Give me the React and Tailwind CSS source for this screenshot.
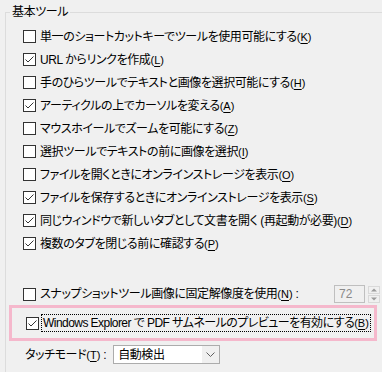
import React from "react";

const font = {
  fontFamily: '"Liberation Sans", "Noto Sans CJK JP", sans-serif',
};

const Check = ({ checked }) => (
  <div className="w-[13px] h-[13px] shrink-0 border border-[#333333] bg-white flex items-center justify-center">
    {checked && (
      <svg width="11" height="11" viewBox="0 0 11 11">
        <path d="M1.5 5.5 L4 8 L9.5 2.5" fill="none" stroke="#333333" strokeWidth="1" />
      </svg>
    )}
  </div>
);

const Key = ({ k }) => (
  <span className="text-[11px] tracking-normal">
    (<span className="underline underline-offset-2">{k}</span>)
  </span>
);

const Row = ({ checked, label, k }) => (
  <div className="h-[23px] flex items-center gap-[4px]">
    <Check checked={checked} />
    <span className="whitespace-nowrap">
      {label}
      <Key k={k} />
    </span>
  </div>
);

const options = [
  { checked: false, label: "単一のショートカットキーでツールを使用可能にする", k: "K" },
  { checked: true, label: "URL からリンクを作成", k: "L" },
  { checked: false, label: "手のひらツールでテキストと画像を選択可能にする", k: "H" },
  { checked: true, label: "アーティクルの上でカーソルを変える", k: "A" },
  { checked: false, label: "マウスホイールでズームを可能にする", k: "Z" },
  { checked: false, label: "選択ツールでテキストの前に画像を選択", k: "I" },
  { checked: false, label: "ファイルを開くときにオンラインストレージを表示", k: "O" },
  { checked: true, label: "ファイルを保存するときにオンラインストレージを表示", k: "S" },
  { checked: true, label: "同じウィンドウで新しいタブとして文書を開く (再起動が必要)", k: "D" },
  { checked: true, label: "複数のタブを閉じる前に確認する", k: "P" },
];

export default function App() {
  return (
    <div
      className="w-[382px] h-[372px] bg-[#f0f0f0] overflow-hidden text-[12px] leading-[16px] tracking-[-0.4px] text-black [font-feature-settings:'palt']"
      style={font}
    >
      <fieldset className="mt-[4px] ml-[5px] w-[420px] h-[400px] border border-[#dcdcdc]">
        <legend className="ml-[4px] px-[2px]">基本ツール</legend>
        <div className="w-[376px] pt-[5px]">
          {/* checkbox list */}
          <div className="pl-[17px] flex flex-col">
            {options.map((o) => (
              <Row key={o.k} {...o} />
            ))}
          </div>

          {/* snapshot resolution */}
          <div className="mt-[28px] h-[22px] pl-[17px] pr-[2px] flex items-center">
            <Check checked={false} />
            <span className="ml-[4px] whitespace-nowrap">
              スナップショットツール画像に固定解像度を使用
              <Key k="N" /> :
            </span>
            <div className="ml-auto flex items-center gap-[3px]">
              <div className="w-[31px] h-[18px] border border-[#bfbfbf] bg-[#f0f0f0] text-[#8a8a8a] text-[12px] leading-[16px] pl-[4px] tracking-normal">
                72
              </div>
              <div className="flex flex-col gap-[1px]">
                <div className="w-[12px] h-[8px] bg-[#f0f0f0] border border-[#d9d9d9] flex items-center justify-center">
                  <svg width="6" height="4" viewBox="0 0 6 4">
                    <path d="M0 3.5 L3 0.5 L6 3.5 Z" fill="#9a9a9a" />
                  </svg>
                </div>
                <div className="w-[12px] h-[8px] bg-[#f0f0f0] border border-[#d9d9d9] flex items-center justify-center">
                  <svg width="6" height="4" viewBox="0 0 6 4">
                    <path d="M0 0.5 L3 3.5 L6 0.5 Z" fill="#9a9a9a" />
                  </svg>
                </div>
              </div>
            </div>
          </div>

          {/* highlighted option */}
          <div className="ml-[3px] w-[368px] h-[36px] border-[3px] border-[#f5b8cc] pl-[14px] flex items-center">
            <Check checked={true} />
            <span className="ml-[2px] px-[1px] border border-dotted border-black whitespace-nowrap leading-[16px] tracking-[-0.55px]">
              Windows Explorer で PDF サムネールのプレビューを有効にする
              <Key k="B" />
            </span>
          </div>

          {/* touch mode */}
          <div className="mt-[4px] pl-[19px] flex items-center gap-[7px]">
            <span className="whitespace-nowrap">
              タッチモード
              <Key k="T" /> :
            </span>
            <div className="w-[107px] h-[19px] border border-[#acacac] bg-white flex items-center">
              <span className="pl-[4px] flex-1">自動検出</span>
              <div className="w-[17px] h-full bg-[#f0f0f0] flex items-center justify-center">
                <svg width="9" height="5" viewBox="0 0 9 5">
                  <path d="M0.5 0.5 L4.5 4.5 L8.5 0.5" fill="none" stroke="#606060" strokeWidth="1" />
                </svg>
              </div>
            </div>
          </div>
        </div>
      </fieldset>
    </div>
  );
}
